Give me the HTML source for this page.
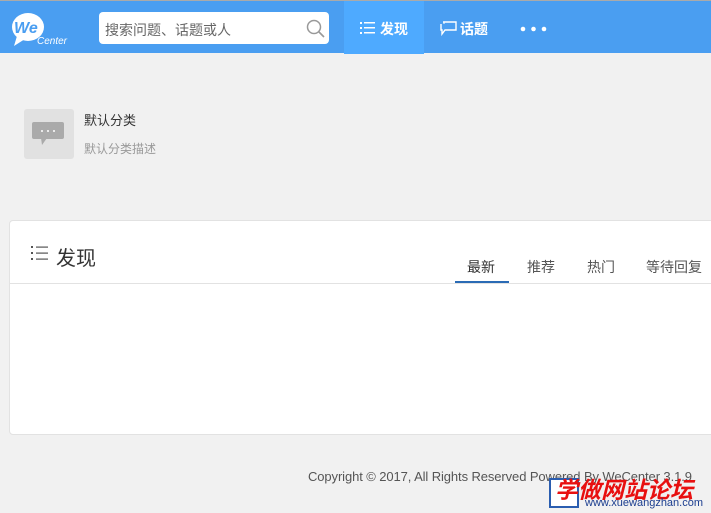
<!DOCTYPE html>
<html><head><meta charset="utf-8"><style>
*{margin:0;padding:0;box-sizing:border-box}
body{width:711px;height:513px;overflow:hidden;background:#f1f1f1;font-family:"Liberation Sans","Noto Sans CJK SC",sans-serif;position:relative}
.hd{position:absolute;left:0;top:0;width:711px;height:53px;background:#4a9ef1;border-top:1px solid #aaa}
.abs{position:absolute}
</style></head><body>
<div class="hd">
 <svg class="abs" style="left:8px;top:9px" width="64" height="38" viewBox="0 0 64 38">
  <ellipse cx="20" cy="17" rx="16" ry="14" fill="#fff"/>
  <path d="M9 26 L6 36 L17 29 Z" fill="#fff"/>
  <text x="6" y="23" font-family="Liberation Sans" font-style="italic" font-weight="bold" font-size="16" fill="#4a9ef1">We</text>
  <text x="29" y="34" font-family="Liberation Sans" font-style="italic" font-size="10" fill="#fff">Center</text>
 </svg>
 <div class="abs" style="left:99px;top:11px;width:230px;height:32px;background:#fff;border-radius:4px"></div>
 <div class="abs" style="left:105px;top:19px;font-size:14px;color:#666">搜索问题、话题或人</div>
 <svg class="abs" style="left:306px;top:18px" width="20" height="20" viewBox="0 0 20 20"><circle cx="8" cy="8" r="6.5" fill="none" stroke="#999" stroke-width="1.5"/><path d="M13 13 L18 18" stroke="#999" stroke-width="1.6"/></svg>
 <div class="abs" style="left:344px;top:0;width:80px;height:53px;background:#4eaaff"></div>
 <svg class="abs" style="left:360px;top:21px" width="16" height="12"><g fill="#fff"><rect x="0" y="0" width="2" height="2"/><rect x="0" y="5" width="2" height="2"/><rect x="0" y="10" width="2" height="2"/><rect x="4" y="0" width="11" height="1.5"/><rect x="4" y="5" width="11" height="1.5"/><rect x="4" y="10" width="11" height="1.5"/></g></svg>
 <div class="abs" style="left:380px;top:18px;font-size:14px;font-weight:bold;color:#fff">发现</div>
 <svg class="abs" style="left:440px;top:20px" width="18" height="16"><path d="M3 1 H16 V9 H5 L2 13 V9 H1 V3" fill="none" stroke="#fff" stroke-width="1.4"/><path d="M4 3 V1" stroke="#fff"/></svg>
 <div class="abs" style="left:460px;top:18px;font-size:14px;font-weight:bold;color:#fff">话题</div>
 <svg class="abs" style="left:520px;top:25px" width="30" height="6"><g fill="#fff"><circle cx="3" cy="3" r="2.3"/><circle cx="13.5" cy="3" r="2.3"/><circle cx="24" cy="3" r="2.3"/></g></svg>
</div>
<div class="abs" style="left:24px;top:109px;width:50px;height:50px;background:#e1e1e1;border-radius:3px"></div>
<svg class="abs" style="left:32px;top:122px" width="34" height="24"><rect x="0" y="0" width="32" height="17" rx="2" fill="#aaa"/><path d="M9 16 L10 23 L15 16Z" fill="#aaa"/><g fill="#fff"><circle cx="10" cy="9" r="1"/><circle cx="16" cy="9" r="1"/><circle cx="22" cy="9" r="1"/></g></svg>
<div class="abs" style="left:84px;top:110px;font-size:13px;color:#333">默认分类</div>
<div class="abs" style="left:84px;top:140px;font-size:12px;color:#999">默认分类描述</div>
<div class="abs" style="left:9px;top:220px;width:710px;height:215px;background:#fff;border:1px solid #e2e2e2;border-radius:4px"></div>
<div class="abs" style="left:10px;top:283px;width:701px;height:1px;background:#e2e2e2"></div>
<svg class="abs" style="left:31px;top:246px" width="18" height="14"><g fill="#555"><rect x="0" y="0" width="2" height="2"/><rect x="0" y="6" width="2" height="2"/><rect x="0" y="12" width="2" height="2"/><rect x="5" y="0.5" width="12" height="1.2"/><rect x="5" y="6.5" width="12" height="1.2"/><rect x="5" y="12.5" width="12" height="1.2"/></g></svg>
<div class="abs" style="left:56px;top:242px;font-size:20px;color:#333">发现</div>
<div class="abs" style="left:467px;top:257px;font-size:14px;color:#333">最新</div>
<div class="abs" style="left:455px;top:281px;width:54px;height:2px;background:#2a6bb5"></div>
<div class="abs" style="left:527px;top:257px;font-size:14px;color:#555">推荐</div>
<div class="abs" style="left:587px;top:257px;font-size:14px;color:#555">热门</div>
<div class="abs" style="left:646px;top:257px;font-size:14px;color:#555;white-space:nowrap">等待回复</div>
<div class="abs" style="left:308px;top:469px;font-size:13px;color:#555;white-space:nowrap;letter-spacing:-0.1px">Copyright © 2017, All Rights Reserved Powered By WeCenter 3.1.9</div>
<div class="abs" style="left:549px;top:478px;width:30px;height:30px;border:2px solid #2a5db0;background:#fff"></div>
<div class="abs" style="left:555px;top:471px;font-size:23px;color:#e81010;font-weight:bold;font-style:italic;white-space:nowrap">学做网站论坛</div>
<div class="abs" style="left:585px;top:497px;font-size:11px;color:#1a3d8f;white-space:nowrap">www.xuewangzhan.com</div>
</body></html>
